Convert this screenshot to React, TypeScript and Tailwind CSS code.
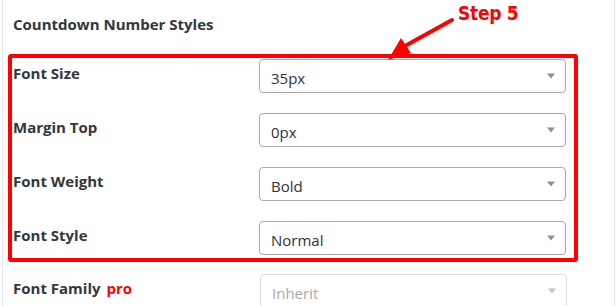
const ROWS = [
  { label: "Font Size", value: "35px" },
  { label: "Margin Top", value: "0px" },
  { label: "Font Weight", value: "Bold" },
  { label: "Font Style", value: "Normal" },
];

const Caret = ({ light }: { light?: boolean }) => (
  <svg width="10" height="6" viewBox="0 0 10 6" className="shrink-0">
    <path d="M1 0.5 L9 0.5 L5 5.5 Z" fill={light ? "#c3c4c7" : "#8c8f94"} />
  </svg>
);

const FakeSelect = ({ value, disabled }: { value: string; disabled?: boolean }) => (
  <div
    className={`w-[307px] h-[34px] flex items-center justify-between pl-[11px] pr-[9px] rounded-[4px] border bg-white ${
      disabled ? "border-[#dcdcde] text-[#a7aaad]" : "border-[#a9a9a9] text-[#2c3338]"
    }`}
  >
    <span className="text-[15px] leading-[20px] pt-[3px]">{value}</span>
    <Caret light={disabled} />
  </div>
);

export default function App() {
  return (
    <div className="w-[616px] h-[306px] bg-white overflow-hidden" style={{ fontFamily: '"Open Sans", sans-serif' }}>
      <div className="relative ml-[2px] w-[613px] h-[306px] pt-[14px] border-l border-r border-[#e6e6e6]">
        <h2 className="pl-[10px] text-[15px] leading-[20px] font-bold text-[#32373c]">
          Countdown Number Styles
        </h2>

        {/* Step 5 annotation */}
        <span
          className="absolute left-[455px] top-[1px] text-[19px] leading-[24px] font-bold text-[#ff0000] tracking-[-0.3px]"
          style={{ fontFamily: '"DejaVu Sans Condensed", "DejaVu Sans", sans-serif' }}
        >
          Step 5
        </span>
        <svg className="absolute left-0 top-0" width="613" height="70" viewBox="0 0 613 70">
          <line x1="449" y1="20" x2="402" y2="46" stroke="#ff0000" strokeWidth="4" strokeLinecap="round" />
          <path d="M385 60 L398 38 L408 53 Z" fill="#ff0000" />
        </svg>

        <div className="mt-[20px] ml-[5px] w-[570px] border-4 border-[#ff0000] rounded-[3px] pt-[1px] pb-[3px] pr-[6px] flex flex-col gap-[20px]">
          {ROWS.map((row) => (
            <div key={row.label} className="flex items-start">
              <div className="w-[247px] pl-[1px] pt-[4px] text-[15px] leading-[20px] font-bold text-[#32373c]">
                {row.label}
              </div>
              <FakeSelect value={row.value} />
            </div>
          ))}
        </div>

        <div className="mt-[12px] ml-[10px] flex items-start">
          <div className="w-[247px] pt-[4px] text-[15px] leading-[20px] font-bold text-[#32373c]">
            Font Family <span className="text-[#ff0000] ml-[2px]">pro</span>
          </div>
          <FakeSelect value="Inherit" disabled />
        </div>
      </div>
    </div>
  );
}
